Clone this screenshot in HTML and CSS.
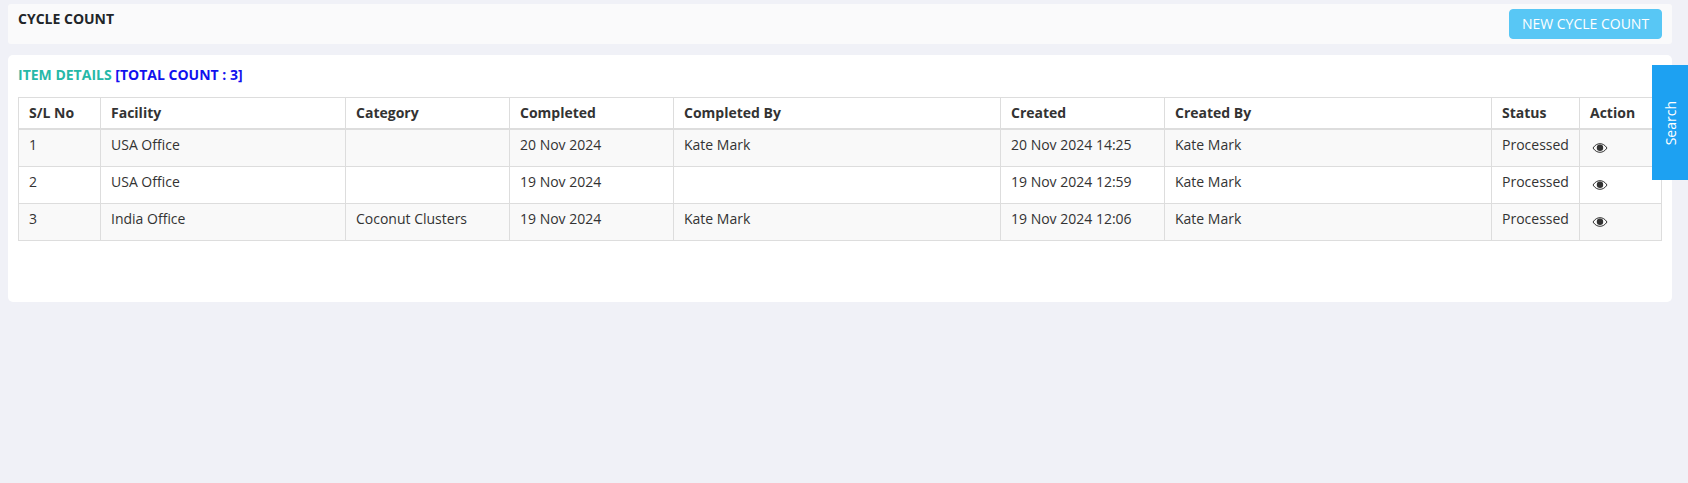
FILE: index.html
```html
<!DOCTYPE html>
<html lang="en">
<head>
<meta charset="utf-8">
<title>Cycle Count</title>
<link rel="stylesheet" href="styles.css">
</head>
<body>
<header class="page-head">
  <h1 class="page-title">CYCLE COUNT</h1>
  <button class="btn-new" type="button">NEW CYCLE COUNT</button>
</header>
<main class="card">
  <h2 class="card-title"><span class="teal">ITEM DETAILS</span> <span class="blue">[TOTAL COUNT : 3]</span></h2>
  <table class="grid">
    <colgroup>
      <col class="c1"><col class="c2"><col class="c3"><col class="c4"><col class="c5"><col class="c6"><col class="c7"><col class="c8"><col class="c9">
    </colgroup>
    <thead>
      <tr><th>S/L No</th><th>Facility</th><th>Category</th><th>Completed</th><th>Completed By</th><th>Created</th><th>Created By</th><th>Status</th><th>Action</th></tr>
    </thead>
    <tbody>
      <tr><td>1</td><td>USA Office</td><td></td><td>20 Nov 2024</td><td>Kate Mark</td><td>20 Nov 2024 14:25</td><td>Kate Mark</td><td>Processed</td><td class="act"><svg class="eye" viewBox="0 0 16 12"><path d="M1 6C3 3 5.300 1.700 8 1.700S13 3 15 6c-2 3-4.300 4.300-7 4.300S3 9 1 6z" fill="none" stroke="#333" stroke-width="1"/><circle cx="8" cy="5.800" r="3.200" fill="#333"/></svg></td></tr>
      <tr><td>2</td><td>USA Office</td><td></td><td>19 Nov 2024</td><td></td><td>19 Nov 2024 12:59</td><td>Kate Mark</td><td>Processed</td><td class="act"><svg class="eye" viewBox="0 0 16 12"><path d="M1 6C3 3 5.300 1.700 8 1.700S13 3 15 6c-2 3-4.300 4.300-7 4.300S3 9 1 6z" fill="none" stroke="#333" stroke-width="1"/><circle cx="8" cy="5.800" r="3.200" fill="#333"/></svg></td></tr>
      <tr><td>3</td><td>India Office</td><td>Coconut Clusters</td><td>19 Nov 2024</td><td>Kate Mark</td><td>19 Nov 2024 12:06</td><td>Kate Mark</td><td>Processed</td><td class="act"><svg class="eye" viewBox="0 0 16 12"><path d="M1 6C3 3 5.300 1.700 8 1.700S13 3 15 6c-2 3-4.300 4.300-7 4.300S3 9 1 6z" fill="none" stroke="#333" stroke-width="1"/><circle cx="8" cy="5.800" r="3.200" fill="#333"/></svg></td></tr>
    </tbody>
  </table>
</main>
<aside class="search-tab"><span class="search-label">Search</span></aside>
</body>
</html>
```
FILE: styles.css
```css
* { box-sizing: border-box; }
html, body { height: 100%; }
body {
  margin: 0;
  padding: 4px 16px 0 8px;
  background: #f0f1f7;
  font-family: "Open Sans", sans-serif;
  font-size: 14px;
  color: #333;
  overflow: hidden;
}
.page-head {
  height: 40px;
  background: #fafafb;
  border-radius: 3px;
  display: flex;
  justify-content: space-between;
  padding: 5px 10px 0;
}
.page-title {
  margin: 0;
  font-size: 14px;
  line-height: 19px;
  font-weight: 700;
  color: #212529;
}
.btn-new {
  width: 153px;
  height: 30px;
  border: 1px solid #58c7f5;
  border-radius: 4px;
  background: #58c7f5;
  color: #fff;
  font-family: inherit;
  font-size: 14px;
  line-height: 20px;
  padding: 0;
}
.card {
  margin-top: 11px;
  height: 247px;
  background: #fff;
  border-radius: 5px;
  padding: 10px;
}
.card-title {
  margin: 0 0 12px;
  font-size: 14px;
  line-height: 20px;
  font-weight: 700;
}
.teal { color: #26b8a8; }
.blue { color: #1111ee; }
.grid {
  width: 1643px;
  table-layout: fixed;
  border-collapse: collapse;
}
.c1 { width: 82px; }
.c2 { width: 245px; }
.c3, .c4, .c6 { width: 164px; }
.c5, .c7 { width: 327px; }
.c8 { width: 88px; }
.c9 { width: 82px; }
.grid th, .grid td {
  border: 1px solid #ddd;
  padding: 8px 10px;
  line-height: 20px;
  text-align: left;
  vertical-align: top;
}
.grid th {
  height: 31px;
  padding: 5px 10px 4px;
  font-weight: 700;
  color: #333;
  border-bottom-width: 2px;
}
.grid td { height: 37px; padding-top: 5px; }
.grid tbody tr:first-child td { height: 38px; }
.grid tbody tr:nth-child(odd) { background: #f9f9f9; }
.grid td.act { padding-left: 12px; }
.eye { display: block; width: 16px; height: 12px; margin-top: 7px; }
.search-tab {
  position: absolute;
  right: 0;
  top: 65px;
  width: 36px;
  height: 115px;
  padding-top: 2px;
  background: #1da1f2;
  color: #fff;
  display: flex;
  align-items: center;
  justify-content: center;
}
.search-label {
  writing-mode: vertical-rl;
  transform: rotate(180deg);
  font-size: 14px;
}
```
